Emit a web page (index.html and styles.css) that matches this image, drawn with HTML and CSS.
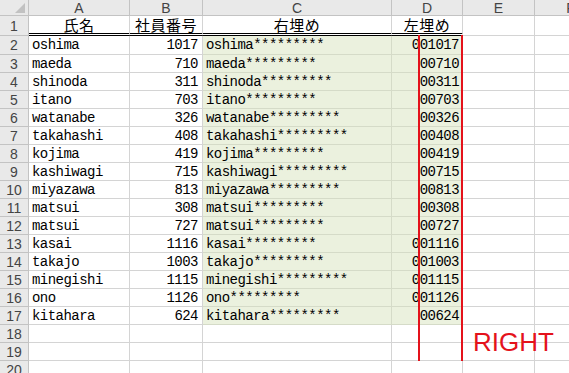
FILE: index.html
```html
<!DOCTYPE html>
<html lang="ja">
<head>
<meta charset="utf-8">
<title>Sheet</title>
<link rel="stylesheet" href="styles.css">
</head>
<body>
<div class="wrap">
  <div class="sheet">
    <div class="h corner"><span class="tri"></span></div>
    <div class="h col">A</div>
    <div class="h col">B</div>
    <div class="h col">C</div>
    <div class="h col">D</div>
    <div class="h col">E</div>
    <div class="h col">F</div>

    <div class="h rn">1</div>
    <div class="c title">氏名</div>
    <div class="c title">社員番号</div>
    <div class="c title">右埋め</div>
    <div class="c title">左埋め</div>
    <div class="c"></div>
    <div class="c"></div>

    <div class="h rn">2</div><div class="c t">oshima</div><div class="c n">1017</div><div class="c g t">oshima*********</div><div class="c g n">001017</div><div class="c"></div><div class="c"></div>
    <div class="h rn">3</div><div class="c t">maeda</div><div class="c n">710</div><div class="c g t">maeda*********</div><div class="c g n">00710</div><div class="c"></div><div class="c"></div>
    <div class="h rn">4</div><div class="c t">shinoda</div><div class="c n">311</div><div class="c g t">shinoda*********</div><div class="c g n">00311</div><div class="c"></div><div class="c"></div>
    <div class="h rn">5</div><div class="c t">itano</div><div class="c n">703</div><div class="c g t">itano*********</div><div class="c g n">00703</div><div class="c"></div><div class="c"></div>
    <div class="h rn">6</div><div class="c t">watanabe</div><div class="c n">326</div><div class="c g t">watanabe*********</div><div class="c g n">00326</div><div class="c"></div><div class="c"></div>
    <div class="h rn">7</div><div class="c t">takahashi</div><div class="c n">408</div><div class="c g t">takahashi*********</div><div class="c g n">00408</div><div class="c"></div><div class="c"></div>
    <div class="h rn">8</div><div class="c t">kojima</div><div class="c n">419</div><div class="c g t">kojima*********</div><div class="c g n">00419</div><div class="c"></div><div class="c"></div>
    <div class="h rn">9</div><div class="c t">kashiwagi</div><div class="c n">715</div><div class="c g t">kashiwagi*********</div><div class="c g n">00715</div><div class="c"></div><div class="c"></div>
    <div class="h rn">10</div><div class="c t">miyazawa</div><div class="c n">813</div><div class="c g t">miyazawa*********</div><div class="c g n">00813</div><div class="c"></div><div class="c"></div>
    <div class="h rn">11</div><div class="c t">matsui</div><div class="c n">308</div><div class="c g t">matsui*********</div><div class="c g n">00308</div><div class="c"></div><div class="c"></div>
    <div class="h rn">12</div><div class="c t">matsui</div><div class="c n">727</div><div class="c g t">matsui*********</div><div class="c g n">00727</div><div class="c"></div><div class="c"></div>
    <div class="h rn">13</div><div class="c t">kasai</div><div class="c n">1116</div><div class="c g t">kasai*********</div><div class="c g n">001116</div><div class="c"></div><div class="c"></div>
    <div class="h rn">14</div><div class="c t">takajo</div><div class="c n">1003</div><div class="c g t">takajo*********</div><div class="c g n">001003</div><div class="c"></div><div class="c"></div>
    <div class="h rn">15</div><div class="c t">minegishi</div><div class="c n">1115</div><div class="c g t">minegishi*********</div><div class="c g n">001115</div><div class="c"></div><div class="c"></div>
    <div class="h rn">16</div><div class="c t">ono</div><div class="c n">1126</div><div class="c g t">ono*********</div><div class="c g n">001126</div><div class="c"></div><div class="c"></div>
    <div class="h rn">17</div><div class="c t">kitahara</div><div class="c n">624</div><div class="c g t">kitahara*********</div><div class="c g n">00624</div><div class="c"></div><div class="c"></div>
    <div class="h rn">18</div><div class="c"></div><div class="c"></div><div class="c"></div><div class="c"></div><div class="c"></div><div class="c"></div>
    <div class="h rn">19</div><div class="c"></div><div class="c"></div><div class="c"></div><div class="c"></div><div class="c"></div><div class="c"></div>
    <div class="h rn">20</div><div class="c"></div><div class="c"></div><div class="c"></div><div class="c"></div><div class="c"></div><div class="c"></div>
  </div>
  <div class="redline left"></div>
  <div class="redline right"></div>
  <div class="label">RIGHT</div>
</div>
</body>
</html>
```
FILE: styles.css
```css
html, body {
  margin: 0;
  padding: 0;
  background: #fff;
  overflow: hidden;
}
.wrap {
  position: relative;
  width: 569px;
  height: 373px;
  overflow: hidden;
}
.sheet {
  display: grid;
  grid-template-columns: 29px 101px 73px 189px 71px 72px 72px;
  grid-template-rows: 16px 20px 19px repeat(18, 18px);
  width: 607px;
}
.sheet > div {
  box-sizing: border-box;
  border-right: 1px solid #d4d4d4;
  border-bottom: 1px solid #d4d4d4;
  display: flex;
  align-items: center;
  overflow: hidden;
  white-space: nowrap;
}
.h {
  background: #e9e9e9;
  color: #444;
  font-family: "Liberation Sans", Arial, sans-serif;
  font-size: 14px;
  justify-content: center;
}
.sheet > .h {
  border-right-color: #c3c3c3;
  border-bottom-color: #c3c3c3;
}
.col {
  padding-top: 1px;
}
.corner {
  position: relative;
}
.tri {
  position: absolute;
  right: 3px;
  bottom: 2px;
  width: 0;
  height: 0;
  border-left: 10px solid transparent;
  border-bottom: 10px solid #c2c2c2;
}
.c {
  font-family: "Liberation Mono", "Courier New", monospace;
  font-size: 14px;
  letter-spacing: -0.53px;
  color: #000;
}
.sheet > .title {
  font-family: "Noto Sans CJK JP", sans-serif;
  font-size: 15px;
  line-height: 16px;
  letter-spacing: 0.5px;
  justify-content: center;
  align-items: flex-end;
  border-bottom: 3px double #000;
  overflow: visible;
}
.t {
  padding-left: 3px;
}
.n {
  justify-content: flex-end;
  padding-right: 4px;
}
.sheet > .g {
  background: #ebf1de;
  border-bottom-color: #d5dbc8;
  border-right-color: #d5dbc8;
}
.sheet > .g.n {
  padding-right: 3px;
}
.redline {
  position: absolute;
  top: 35px;
  width: 2px;
  height: 326px;
  background: #e4121b;
}
.redline.left {
  left: 418px;
}
.redline.right {
  left: 461px;
}
.label {
  position: absolute;
  left: 473px;
  top: 327px;
  font-family: "Liberation Sans", Arial, sans-serif;
  font-size: 26px;
  line-height: 30px;
  color: #e4121b;
}
```
